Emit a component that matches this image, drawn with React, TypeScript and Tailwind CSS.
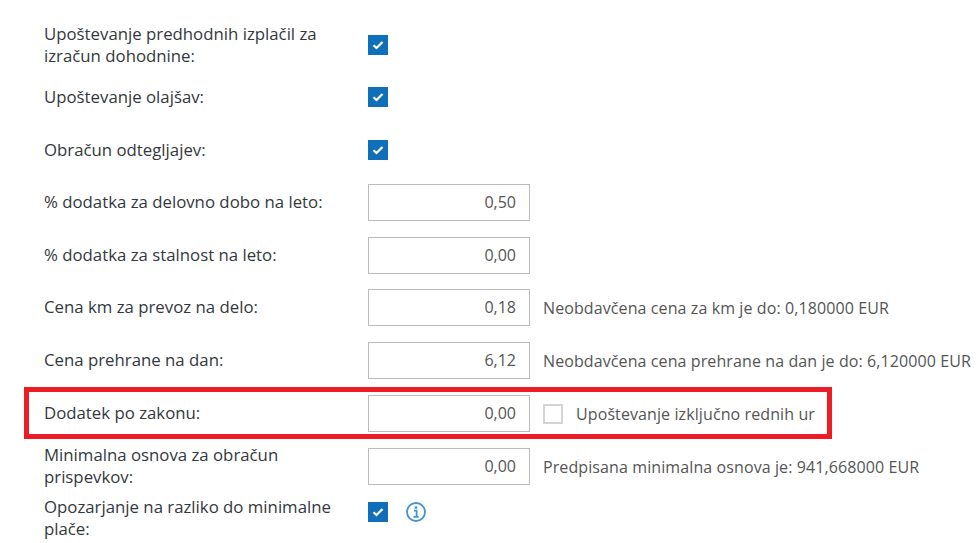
function Check({ checked = true }: { checked?: boolean }) {
  if (!checked) {
    return <span className="block h-5 w-5 border-2 border-[#d4d4d4] bg-white" />;
  }
  return (
    <span className="flex h-5 w-5 items-center justify-center bg-[#0f6fb8]">
      <svg width="12" height="10" viewBox="0 0 12 10" fill="none">
        <path d="M1.5 5.2 4.5 8 10.5 2" stroke="white" strokeWidth="2.2" />
      </svg>
    </span>
  );
}

function Field({ value }: { value: string }) {
  return (
    <div className="flex h-[37px] w-[162px] shrink-0 items-center justify-end border border-[#bcbcbc] bg-white pb-[2px] pr-[13px] text-[#555]">
      {value}
    </div>
  );
}

function Row({
  label,
  className,
  lift,
  children,
}: {
  label: string;
  className: string;
  lift?: boolean;
  children: React.ReactNode;
}) {
  return (
    <div className={`flex items-center ${className}`}>
      <div
        className={`w-[324px] shrink-0 pr-2 text-[16.8px] font-medium leading-[22px] text-[#33383d] ${lift ? "mb-[2px]" : ""}`}
      >
        {label}
      </div>
      {children}
    </div>
  );
}

function Note({ children }: { children: React.ReactNode }) {
  return (
    <span className="ml-[13px] whitespace-nowrap tracking-[0.1px] text-[#555]">{children}</span>
  );
}

export default function App() {
  return (
    <div className="relative h-[543px] w-[976px] overflow-hidden bg-white pl-[44px] pt-[23px] font-['Open_Sans',sans-serif] text-[16px]">
      <Row label="Upoštevanje predhodnih izplačil za izračun dohodnine:" className="h-[44px]">
        <Check />
      </Row>
      <Row label="Upoštevanje olajšav:" className="mt-[11px] h-[37px]">
        <Check />
      </Row>
      <Row label="Obračun odtegljajev:" className="mt-[16px] h-[37px]">
        <Check />
      </Row>
      <Row lift label="% dodatka za delovno dobo na leto:" className="mt-[16px] h-[37px]">
        <Field value="0,50" />
      </Row>
      <Row lift label="% dodatka za stalnost na leto:" className="mt-[16px] h-[37px]">
        <Field value="0,00" />
      </Row>
      <Row lift label="Cena km za prevoz na delo:" className="mt-[15px] h-[37px]">
        <Field value="0,18" />
        <Note>Neobdavčena cena za km je do: 0,180000 EUR</Note>
      </Row>
      <Row lift label="Cena prehrane na dan:" className="mt-[16px] h-[37px]">
        <Field value="6,12" />
        <Note>Neobdavčena cena prehrane na dan je do: 6,120000 EUR</Note>
      </Row>
      <Row lift label="Dodatek po zakonu:" className="mt-[16px] h-[37px]">
        <Field value="0,00" />
        <span className="ml-[13px]">
          <Check checked={false} />
        </span>
        <Note>Upoštevanje izključno rednih ur</Note>
      </Row>
      <Row lift label="Minimalna osnova za obračun prispevkov:" className="mt-[16px] h-[37px]">
        <Field value="0,00" />
        <Note>Predpisana minimalna osnova je: 941,668000 EUR</Note>
      </Row>
      <Row lift label="Opozarjanje na razliko do minimalne plače:" className="mt-[12px] h-[44px]">
        <span className="mb-[14px] flex items-center">
          <Check />
          <svg className="ml-[18px]" width="20" height="20" viewBox="0 0 20 20" fill="none">
            <circle cx="10" cy="10" r="9" stroke="#3f94d6" strokeWidth="1.8" />
            <circle cx="10" cy="5.6" r="1.4" fill="#3f94d6" />
            <path d="M8 8.6h2.6v6M7.6 14.9h5" stroke="#3f94d6" strokeWidth="1.8" />
          </svg>
        </span>
      </Row>
      <div className="absolute left-[24px] top-[387px] h-[52px] w-[808px] border-[5px] border-[#ed1c24]" />
    </div>
  );
}
